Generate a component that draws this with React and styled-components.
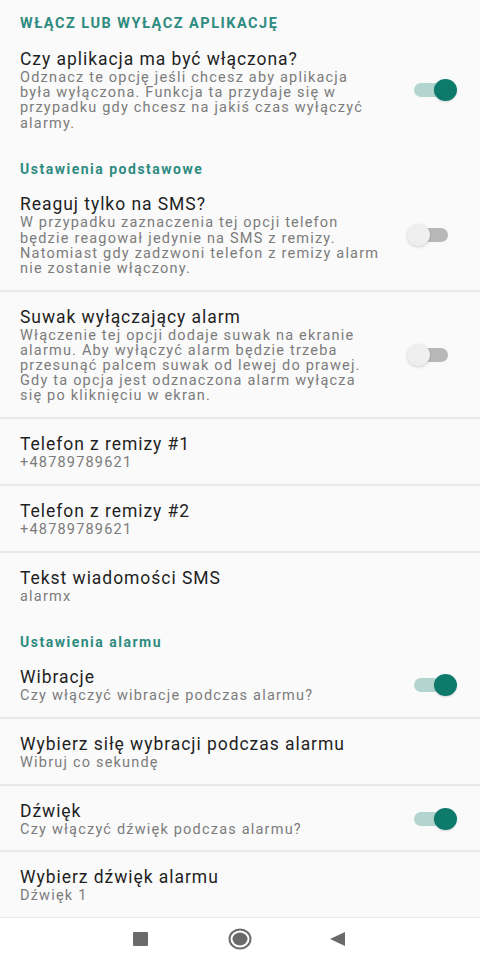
import React from "react";
import styled, { createGlobalStyle } from "styled-components";

const Global = createGlobalStyle`
  html, body { margin: 0; padding: 0; background: #fafafa; }
  body { font-family: Roboto, "Noto Sans", "Liberation Sans", sans-serif; }
  * { box-sizing: border-box; }
`;

const Screen = styled.div`
  width: 480px;
  height: 960px;
  display: flex;
  flex-direction: column;
  background: #fafafa;
  overflow: hidden;
`;

const List = styled.div`
  flex: 1;
  display: flex;
  flex-direction: column;
  overflow: hidden;
`;

const Category = styled.div`
  padding: ${(p) => (p.$first ? "15px 20px 1px" : "16px 20px 1px")};
  font-size: ${(p) => (p.$upper ? "14.5px" : "14px")};
  line-height: 18px;
  font-weight: 700;
  color: #2e8b80;
  letter-spacing: 1.5px;
  white-space: nowrap;
`;

const Item = styled.div`
  display: flex;
  align-items: center;
  padding: 15px 23px 13.5px 20px;
  border-bottom: ${(p) => (p.$divider ? "2px solid #e9e9e9" : "0")};
`;

const Texts = styled.div`
  flex: 1;
  min-width: 0;
  padding-right: 12px;
`;

const Title = styled.div`
  font-size: 17.5px;
  line-height: 20px;
  color: #1f1f1f;
  letter-spacing: 0.95px;
  white-space: nowrap;
`;

const Summary = styled.div`
  font-size: 14.5px;
  line-height: 15.2px;
  color: #7c7c7c;
  letter-spacing: 1.2px;
  margin-top: 1px;
`;

const Line = styled.span`
  display: block;
  white-space: nowrap;
`;

const SwitchBox = styled.div`
  position: relative;
  width: 50px;
  height: 24px;
  flex: none;
`;

const Track = styled.div`
  position: absolute;
  left: 7px;
  right: 9px;
  top: 5px;
  height: 14px;
  border-radius: 7px;
  background: ${(p) => (p.$on ? "#b2d5d0" : "#b8b8b8")};
`;

const Thumb = styled.div`
  position: absolute;
  top: 1px;
  ${(p) => (p.$on ? "right: 0;" : "left: 0;")}
  width: 23px;
  height: 22px;
  border-radius: 50%;
  background: ${(p) => (p.$on ? "#0d7a6b" : "#efefef")};
  box-shadow: ${(p) =>
    p.$on ? "0 1px 2px rgba(0,0,0,0.15)" : "0 1px 3px rgba(0,0,0,0.18)"};
`;

const Switch = ({ on }) => (
  <SwitchBox>
    <Track $on={on} />
    <Thumb $on={on} />
  </SwitchBox>
);

const NavBar = styled.div`
  height: 42px;
  flex: none;
  background: #ffffff;
  display: flex;
  align-items: center;
`;

const NavSlot = styled.div`
  width: 0;
  height: 24px;
  display: flex;
  align-items: center;
  justify-content: center;
  margin-left: ${(p) => p.$gap}px;
`;

const NavIcon = styled.svg`
  flex: none;
`;

const Pref = ({ title, summary, toggle, divider }) => (
  <Item $divider={divider}>
    <Texts>
      <Title>{title}</Title>
      {summary && (
        <Summary>
          {(Array.isArray(summary) ? summary : [summary]).map((l, i) => (
            <Line key={i}>{l}</Line>
          ))}
        </Summary>
      )}
    </Texts>
    {toggle !== undefined && <Switch on={toggle} />}
  </Item>
);

export default function App() {
  return (
    <>
      <Global />
      <Screen>
        <List>
          <Category $first $upper>WŁĄCZ LUB WYŁĄCZ APLIKACJĘ</Category>
          <Pref
            title="Czy aplikacja ma być włączona?"
            summary={[
              "Odznacz te opcję jeśli chcesz aby aplikacja",
              "była wyłączona. Funkcja ta przydaje się w",
              "przypadku gdy chcesz na jakiś czas wyłączyć",
              "alarmy.",
            ]}
            toggle={true}
          />
          <Category>Ustawienia podstawowe</Category>
          <Pref
            title="Reaguj tylko na SMS?"
            summary={[
              "W przypadku zaznaczenia tej opcji telefon",
              "będzie reagował jedynie na SMS z remizy.",
              "Natomiast gdy zadzwoni telefon z remizy alarm",
              "nie zostanie włączony.",
            ]}
            toggle={false}
            divider
          />
          <Pref
            title="Suwak wyłączający alarm"
            summary={[
              "Włączenie tej opcji dodaje suwak na ekranie",
              "alarmu. Aby wyłączyć alarm będzie trzeba",
              "przesunąć palcem suwak od lewej do prawej.",
              "Gdy ta opcja jest odznaczona alarm wyłącza",
              "się po kliknięciu w ekran.",
            ]}
            toggle={false}
            divider
          />
          <Pref title="Telefon z remizy #1" summary="+48789789621" divider />
          <Pref title="Telefon z remizy #2" summary="+48789789621" divider />
          <Pref title="Tekst wiadomości SMS" summary="alarmx" />
          <Category>Ustawienia alarmu</Category>
          <Pref
            title="Wibracje"
            summary="Czy włączyć wibracje podczas alarmu?"
            toggle={true}
            divider
          />
          <Pref
            title="Wybierz siłę wybracji podczas alarmu"
            summary="Wibruj co sekundę"
            divider
          />
          <Pref
            title="Dźwięk"
            summary="Czy włączyć dźwięk podczas alarmu?"
            toggle={true}
            divider
          />
          <Pref title="Wybierz dźwięk alarmu" summary="Dźwięk 1" divider />
        </List>
        <NavBar>
          <NavSlot $gap={140}>
            <NavIcon width="15" height="14" viewBox="0 0 15 14">
              <rect x="0" y="0" width="15" height="14" rx="1" fill="#6a6a6a" />
            </NavIcon>
          </NavSlot>
          <NavSlot $gap={100}>
            <NavIcon width="24" height="22" viewBox="0 0 24 22">
              <ellipse cx="12" cy="11" rx="10.5" ry="9.5" fill="none" stroke="#6a6a6a" strokeWidth="2" />
              <ellipse cx="12" cy="11" rx="7.5" ry="6.5" fill="#6a6a6a" />
            </NavIcon>
          </NavSlot>
          <NavSlot $gap={98}>
            <NavIcon width="16" height="14" viewBox="0 0 16 14">
              <path d="M0 7 L15 0 L15 14 Z" fill="#6a6a6a" />
            </NavIcon>
          </NavSlot>
        </NavBar>
      </Screen>
    </>
  );
}
